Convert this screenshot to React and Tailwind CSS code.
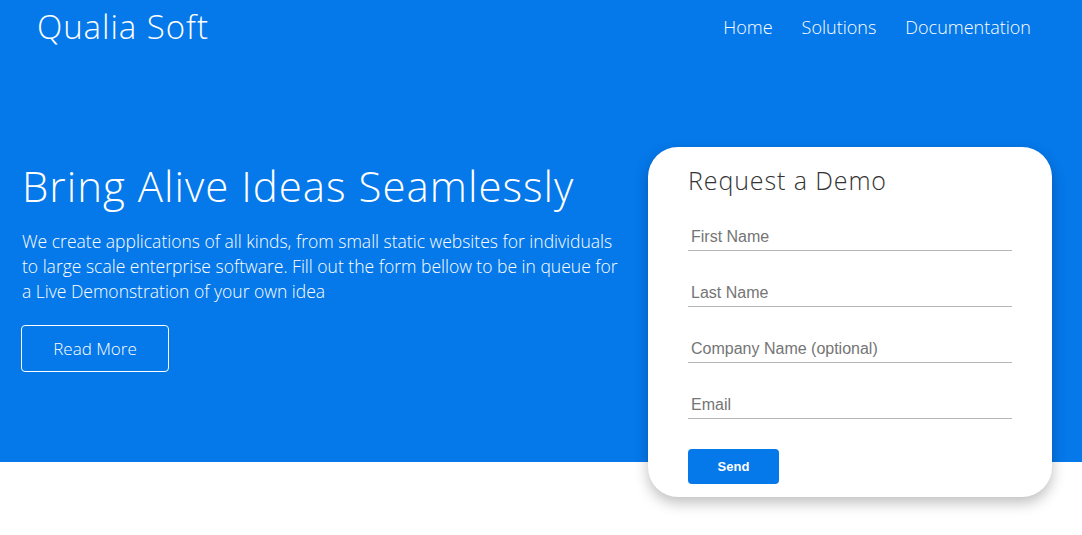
export default function App() {
  const fields = ["First Name", "Last Name", "Company Name (optional)", "Email"];

  return (
    <div className="min-h-[535px] bg-white" style={{ fontFamily: '"Open Sans", sans-serif' }}>
      <div className="h-[462px] bg-[#0578ea] text-white">
        {/* header */}
        <header className="flex items-center justify-between h-[54px] pl-[37px] pr-[51px]">
          <div className="text-[33px] font-light tracking-[0.95px]">Qualia Soft</div>
          <nav className="flex gap-[29px] text-[18px] font-light">
            <a>Home</a>
            <a>Solutions</a>
            <a>Documentation</a>
          </nav>
        </header>

        {/* hero */}
        <div className="flex pl-[22px] pr-[30px] pt-[93px]">
          <div className="w-[600px] pt-[15px]">
            <h1 className="text-[42px] font-light leading-[48px] tracking-[1px]">Bring Alive Ideas Seamlessly</h1>
            <p className="mt-[19px] text-[17.5px] font-light leading-[25px]">
              We create applications of all kinds, from small static websites for individuals to large scale enterprise software. Fill out the form bellow to be in queue for a Live Demonstration of your own idea
            </p>
            <button className="mt-[21px] -ml-[1px] w-[148px] h-[47px] border border-white rounded-[4px] text-[17px] font-light">
              Read More
            </button>
          </div>

          <div className="ml-auto w-[404px] h-[350px] bg-white rounded-[30px] shadow-[0_6px_14px_rgba(0,0,0,0.25)] px-[40px] pt-[17px] text-[#333]">
            <h2 className="text-[25px] font-light leading-[32px] tracking-[0.9px]">Request a Demo</h2>
            <div className="mt-[22px] flex flex-col gap-[23px]" style={{ fontFamily: '"Liberation Sans", Arial, sans-serif' }}>
              {fields.map((f) => (
                <input
                  key={f}
                  placeholder={f}
                  className="w-full h-[33px] px-[3px] pt-[6px] border-b border-[#b5b5b5] text-[16px] text-[#333] placeholder:text-[#757575] outline-none"
                />
              ))}
            </div>
            <button
              className="mt-[30px] w-[91px] h-[35px] bg-[#0578ea] text-white rounded-[4px] text-[13px] font-bold"
              style={{ fontFamily: '"Liberation Sans", Arial, sans-serif' }}
            >
              Send
            </button>
          </div>
        </div>
      </div>
    </div>
  );
}
